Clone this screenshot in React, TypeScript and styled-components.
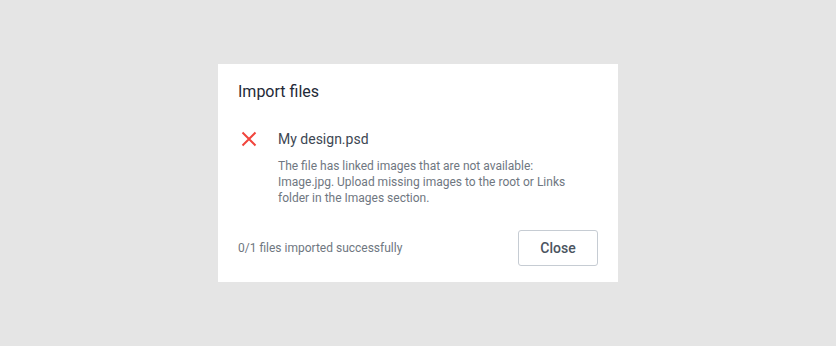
import React from "react";
import styled, { createGlobalStyle } from "styled-components";

const GlobalStyle = createGlobalStyle`
  html, body {
    margin: 0;
    padding: 0;
    background: #e5e5e5;
    font-family: Roboto, "Liberation Sans", Arial, sans-serif;
  }
`;

const Page = styled.div`
  width: 836px;
  height: 346px;
  display: flex;
  align-items: flex-start;
  justify-content: center;
  padding-top: 64px;
  box-sizing: border-box;
`;

const Dialog = styled.div`
  width: 400px;
  height: 218px;
  background: #ffffff;
  box-sizing: border-box;
  padding: 18px 20px 16px 20px;
  display: flex;
  flex-direction: column;
`;

const Title = styled.h2`
  margin: 0;
  font-size: 16px;
  line-height: 20px;
  font-weight: 400;
  color: #1f2a37;
`;

const FileRow = styled.div`
  display: flex;
  gap: 20px;
  margin-top: 27px;
  padding-left: 2px;
`;

const IconBox = styled.div`
  width: 18px;
  height: 20px;
  display: flex;
  align-items: center;
  justify-content: center;
  flex-shrink: 0;
`;

const FileInfo = styled.div`
  display: flex;
  flex-direction: column;
`;

const FileName = styled.div`
  font-size: 14px;
  line-height: 20px;
  color: #3d4753;
`;

const FileError = styled.p`
  margin: 9px 0 0;
  max-width: 300px;
  font-size: 12px;
  line-height: 16px;
  color: #6f7781;
`;

const Footer = styled.div`
  margin-top: auto;
  display: flex;
  align-items: center;
  justify-content: space-between;
`;

const Summary = styled.span`
  font-size: 12px;
  color: #6f7781;
`;

const CloseButton = styled.button`
  width: 80px;
  height: 36px;
  border: 1px solid #c6ccd3;
  border-radius: 3px;
  background: #ffffff;
  font-family: inherit;
  font-size: 14px;
  font-weight: 500;
  color: #4a5460;
  cursor: pointer;
`;

const ErrorIcon = () => (
  <svg width="16" height="16" viewBox="0 0 16 16">
    <path d="M1.5 1.5 L14.5 14.5 M14.5 1.5 L1.5 14.5" stroke="#f1453d" strokeWidth="2" fill="none" />
  </svg>
);

export default function App() {
  return (
    <>
      <GlobalStyle />
      <Page>
        <Dialog>
          <Title>Import files</Title>
          <FileRow>
            <IconBox>
              <ErrorIcon />
            </IconBox>
            <FileInfo>
              <FileName>My design.psd</FileName>
              <FileError>
                The file has linked images that are not available: Image.jpg. Upload missing images to the root or
                Links folder in the Images section.
              </FileError>
            </FileInfo>
          </FileRow>
          <Footer>
            <Summary>0/1 files imported successfully</Summary>
            <CloseButton>Close</CloseButton>
          </Footer>
        </Dialog>
      </Page>
    </>
  );
}
